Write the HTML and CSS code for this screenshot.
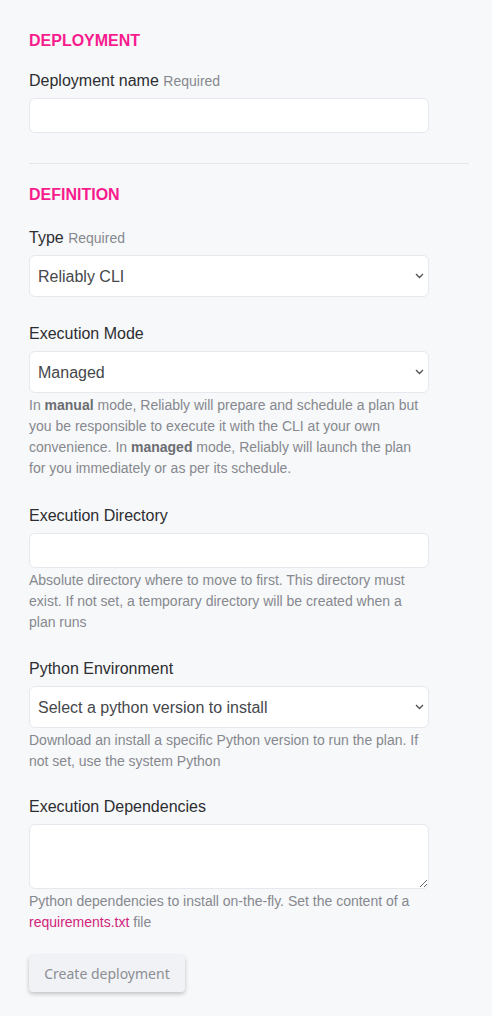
FILE: index.html
```html
<!DOCTYPE html>
<html lang="en">
<head>
<meta charset="utf-8">
<title>Create deployment</title>
<link rel="stylesheet" href="styles.css">
</head>
<body>
<form class="page">
  <section class="section">
    <h2 class="section-title">DEPLOYMENT</h2>
    <div class="field first">
      <label class="label">Deployment name <span class="req">Required</span></label>
      <input class="input" type="text">
    </div>
  </section>
  <hr class="divider">
  <section class="section">
    <h2 class="section-title">DEFINITION</h2>
    <div class="field first type">
      <label class="label">Type <span class="req">Required</span></label>
      <div class="select-wrap">
        <select class="select"><option>Reliably CLI</option></select>
        <svg class="chev" width="9" height="6" viewBox="0 0 9 6"><path d="M1 1l3.5 3.5L8 1" fill="none" stroke="#555" stroke-width="1.4"/></svg>
      </div>
    </div>
    <div class="field mode">
      <label class="label">Execution Mode</label>
      <div class="select-wrap">
        <select class="select"><option>Managed</option></select>
        <svg class="chev" width="9" height="6" viewBox="0 0 9 6"><path d="M1 1l3.5 3.5L8 1" fill="none" stroke="#555" stroke-width="1.4"/></svg>
      </div>
      <p class="help">In <b>manual</b> mode, Reliably will prepare and schedule a plan but you be responsible to execute it with the CLI at your own convenience. In <b>managed</b> mode, Reliably will launch the plan for you immediately or as per its schedule.</p>
    </div>
    <div class="field dir">
      <label class="label">Execution Directory</label>
      <input class="input" type="text">
      <p class="help">Absolute directory where to move to first. This directory must exist. If not set, a temporary directory will be created when a plan runs</p>
    </div>
    <div class="field env">
      <label class="label">Python Environment</label>
      <div class="select-wrap">
        <select class="select"><option>Select a python version to install</option></select>
        <svg class="chev" width="9" height="6" viewBox="0 0 9 6"><path d="M1 1l3.5 3.5L8 1" fill="none" stroke="#555" stroke-width="1.4"/></svg>
      </div>
      <p class="help">Download an install a specific Python version to run the plan. If not set, use the system Python</p>
    </div>
    <div class="field">
      <label class="label">Execution Dependencies</label>
      <textarea class="textarea"></textarea>
      <p class="help">Python dependencies to install on-the-fly. Set the content of a <a class="link" href="#">requirements.txt</a> file</p>
    </div>
  </section>
  <div class="actions">
    <button class="btn" type="button">Create deployment</button>
  </div>
</form>
</body>
</html>
```

FILE: styles.css
```css
html, body {
  margin: 0;
  padding: 0;
  background: #f7f8fa;
}
body {
  font-family: "Liberation Sans", Arial, sans-serif;
  color: #2c2d30;
}
.page {
  padding: 29px 23px 0 29px;
}
.section-title {
  margin: 0;
  font-size: 16px;
  line-height: 24px;
  font-weight: 700;
  color: #f81b8d;
}
.field {
  margin-top: 23px;
  display: flex;
  flex-direction: column;
}
.field.mode {
  margin-top: 25px;
}
.field.dir {
  margin-top: 25px;
}
.field.env {
  margin-top: 24px;
}
.field.first {
  margin-top: 16px;
}
.field.first.type {
  margin-top: 19px;
}
.label {
  font-size: 16px;
  line-height: 24px;
  color: #2c2d30;
  margin-bottom: 5px;
}
.req {
  font-size: 14px;
  color: #86888e;
}
.input, .select, .textarea {
  box-sizing: border-box;
  width: 400px;
  background: #fff;
  border: 1px solid #e6e8ee;
  border-radius: 6px;
  font-family: "Liberation Sans", Arial, sans-serif;
  font-size: 16px;
  color: #45474b;
  margin: 0;
  outline: none;
}
.input {
  height: 35px;
  padding: 0 8px;
}
.select-wrap {
  position: relative;
  width: 400px;
}
.select {
  display: block;
  height: 42px;
  padding: 0 24px 0 8px;
  appearance: none;
  -webkit-appearance: none;
}
.chev {
  position: absolute;
  right: 5px;
  top: 18px;
}
.textarea {
  display: block;
  height: 65px;
  padding: 6px 8px;
  resize: vertical;
}
.help {
  margin: 2px 0 0;
  width: 400px;
  font-size: 14px;
  line-height: 21px;
  color: #86888e;
}
.help b {
  color: #6b6d72;
}
.link {
  color: #d2237a;
  text-decoration: none;
}
.divider {
  border: 0;
  border-top: 1px solid #e4e6ea;
  margin: 30px 0 19px;
}
.actions {
  margin-top: 22px;
  padding-bottom: 24px;
}
.btn {
  height: 37px;
  width: 156px;
  padding: 0;
  border: 0;
  border-radius: 4px;
  background: #f1f2f5;
  color: #8c8e94;
  font-family: "Noto Sans", "Open Sans", sans-serif;
  font-size: 14px;
  box-shadow: 0 2px 4px rgba(0, 0, 0, 0.22);
}
```
